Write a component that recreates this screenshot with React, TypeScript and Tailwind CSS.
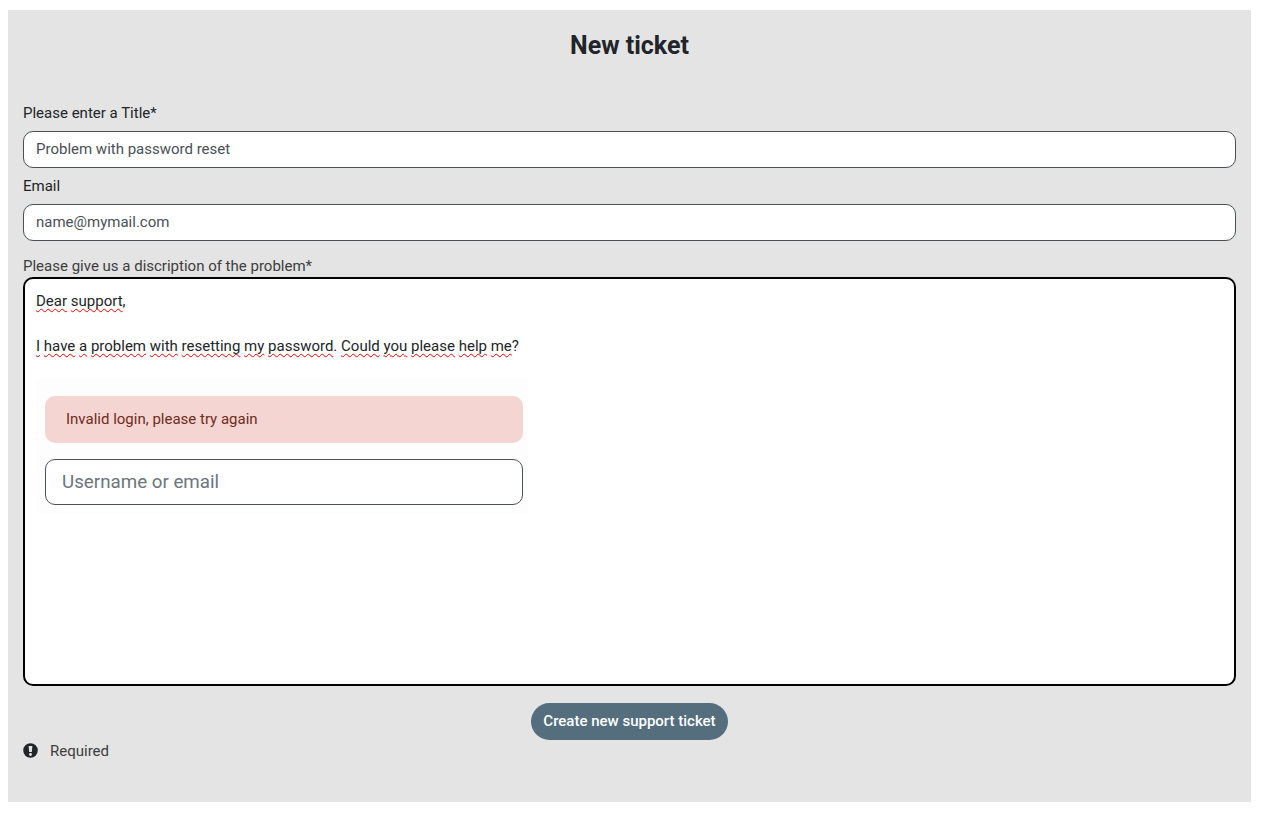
import React, { ReactElement } from 'react'

function Squiggle({ text }: { text: string }): ReactElement {
    return (
        <>
            {text.split(' ').map((word, i) => {
                const match = word.match(/^(.*?)([.,?]?)$/)
                return (
                    <React.Fragment key={i}>
                        {i > 0 && ' '}
                        <span className="underline decoration-wavy decoration-[#ff0000] decoration-[1.2px] underline-offset-2 [text-decoration-skip-ink:none]">
                            {match?.[1]}
                        </span>
                        {match?.[2]}
                    </React.Fragment>
                )
            })}
        </>
    )
}

function Field({ label, value }: { label: string; value: string }): ReactElement {
    return (
        <div>
            <label className="block h-[21px] text-[15px] leading-[21px] text-[#212529]">{label}</label>
            <input
                defaultValue={value}
                className="mt-[7px] block h-[37px] w-full rounded-[10px] border border-[#495057] bg-white px-[12px] pb-[1px] text-[15px] text-[#495057] outline-none"
            />
        </div>
    )
}

export default function App(): ReactElement {
    return (
        <div className="min-h-[814px] bg-white pt-[10px] pl-[8px] pr-[10px] font-['Roboto',sans-serif]">
            <div className="h-[792px] bg-[#e4e4e4] px-[15px]">
                <h2 className="pt-[21px] text-center text-[25px] leading-[30px] font-bold text-[#212529]">
                    New ticket
                </h2>
                <div className="mt-[42px] flex flex-col gap-[8px]">
                    <Field label="Please enter a Title*" value="Problem with password reset" />
                    <Field label="Email" value="name@mymail.com" />
                </div>
                <label className="mt-[15px] block h-[21px] text-[15px] leading-[21px] text-[#3d3d3d]">
                    Please give us a discription of the problem*
                </label>
                <div className="h-[409px] rounded-[10px] border-2 border-black bg-white px-[11px] pt-[12px] text-[15px] leading-[21px] text-[#212529]">
                    <p>
                        <Squiggle text="Dear support," />
                    </p>
                    <p className="mt-[24px]">
                        <Squiggle text="I have a problem with resetting my password. Could you please help me?" />
                    </p>
                    <div className="mt-[22px] h-[134px] w-[492px] bg-[#fdfdfd] pr-[5px] pl-[9px] pt-[17px]">
                        <div className="flex h-[47px] items-center rounded-[10px] bg-[#f5d5d1] px-[21px] text-[15px] text-[#6d2c22]">
                            Invalid login, please try again
                        </div>
                        <input
                            placeholder="Username or email"
                            className="mt-[16px] block h-[46px] w-full rounded-[10px] border border-[#495057] bg-white px-[16px] text-[18.75px] text-[#495057] outline-none placeholder:text-[#6c757d]"
                        />
                    </div>
                </div>
                <div className="mt-[17px] flex justify-center">
                    <button className="h-[37px] rounded-full bg-[#546e7e] px-[12px] text-[15px] font-medium text-white">
                        Create new support ticket
                    </button>
                </div>
                <div className="mt-[1px] flex h-[21px] items-center text-[15px] text-[#3d3d3d]">
                    <svg viewBox="0 0 512 512" className="mb-[2px] h-[15px] w-[15px] fill-[#212529]">
                        <path
                            fillRule="evenodd"
                            d="M256 8a248 248 0 1 0 0 496 248 248 0 0 0 0-496zM192 100h128l-18 210h-92zM256 340a50 50 0 1 1 0 100 50 50 0 0 1 0-100z"
                        />
                    </svg>
                    <span className="ml-[12px]">Required</span>
                </div>
            </div>
        </div>
    )
}
